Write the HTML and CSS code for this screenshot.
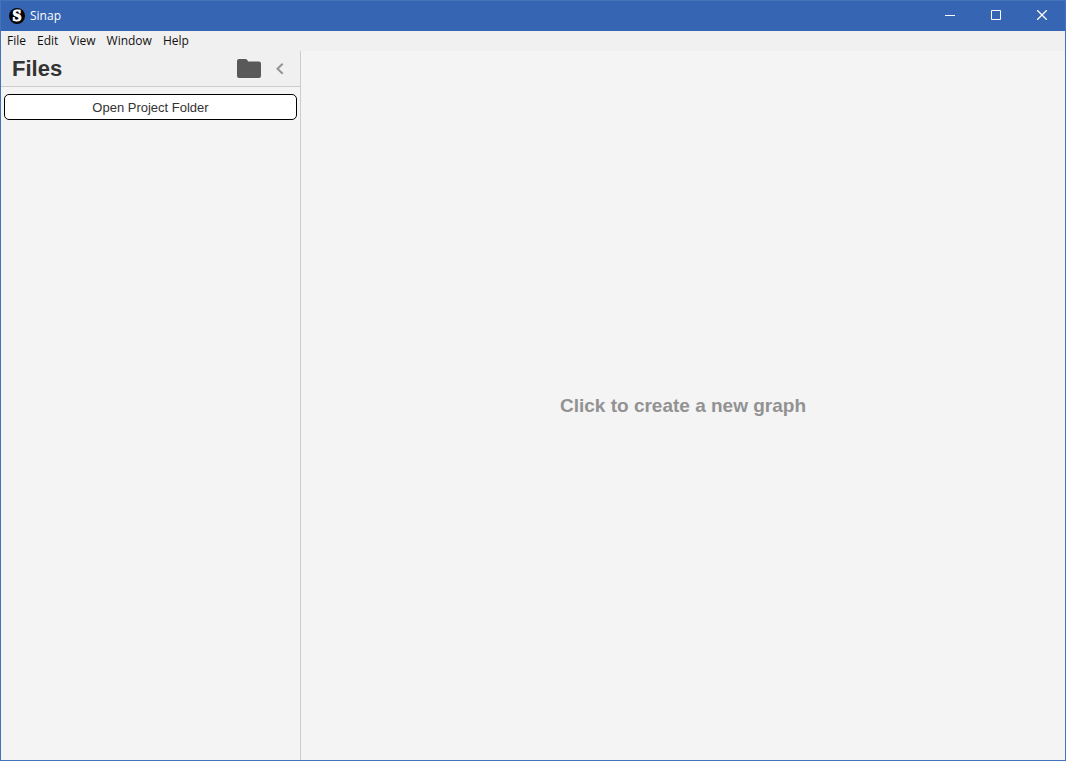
FILE: index.html
```html
<!DOCTYPE html>
<html lang="en">
<head>
<meta charset="utf-8">
<meta name="viewport" content="width=device-width, initial-scale=1">
<title>Sinap</title>
<link rel="stylesheet" href="styles.css">
</head>
<body>
<div class="window">
  <header class="titlebar">
    <svg class="logo" viewBox="0 0 16 16" aria-hidden="true">
      <circle cx="8" cy="8" r="8" fill="#050505"/>
      <text class="logo-letter" x="8" y="13" text-anchor="middle">S</text>
    </svg>
    <span class="app-name">Sinap</span>
    <div class="controls">
      <button class="control" type="button" aria-label="Minimize">
        <svg class="control-icon" viewBox="0 0 10 10"><path d="M0 5.5H10"/></svg>
      </button>
      <button class="control" type="button" aria-label="Maximize">
        <svg class="control-icon" viewBox="0 0 10 10"><path d="M.5 .5H9.5V9.5H.5Z"/></svg>
      </button>
      <button class="control" type="button" aria-label="Close">
        <svg class="control-icon" viewBox="0 0 10 10"><path stroke-width="1.300" d="M0 0L10 10M10 0L0 10"/></svg>
      </button>
    </div>
  </header>
  <nav class="menubar" aria-label="Application menu">
    <button class="menu-item" type="button">File</button>
    <button class="menu-item" type="button">Edit</button>
    <button class="menu-item" type="button">View</button>
    <button class="menu-item" type="button">Window</button>
    <button class="menu-item" type="button">Help</button>
  </nav>
  <div class="workspace">
    <aside class="sidebar">
      <div class="panel-header">
        <h1 class="panel-title">Files</h1>
        <button class="icon-button" type="button" aria-label="Project folder">
          <svg class="folder-icon" viewBox="0 0 24 20"><path fill="#595959" d="M2 0H8.500Q9.300 0 9.800 .6L11.300 2.400H22Q24 2.400 24 4.400V17Q24 19 22 19H2Q0 19 0 17V2Q0 0 2 0Z"/></svg>
        </button>
        <button class="icon-button" type="button" aria-label="Collapse sidebar">
          <svg class="chevron-icon" viewBox="0 0 8 12"><path d="M6.700 .8L1.500 5.800L6.700 10.800" fill="none" stroke="#939393" stroke-width="2"/></svg>
        </button>
      </div>
      <div class="panel-body">
        <button class="open-button" type="button">Open Project Folder</button>
      </div>
    </aside>
    <main class="canvas">
      <button class="new-graph" type="button">Click to create a new graph</button>
    </main>
  </div>
</div>
</body>
</html>
```
FILE: styles.css
```css
* { box-sizing: border-box; }

body {
  margin: 0;
  font-family: "Liberation Sans", Arial, sans-serif;
  background: #f4f4f4;
}

button {
  margin: 0;
  padding: 0;
  border: 0;
  background: none;
  font: inherit;
  color: inherit;
}

svg { display: block; }

.window {
  display: flex;
  flex-direction: column;
  min-height: 100vh;
  border: 1px solid #4573b9;
}

.titlebar {
  display: flex;
  align-items: center;
  height: 30px;
  padding-left: 8px;
  background: #3665b3;
  color: #fff;
  font: 12px/16px "Open Sans", sans-serif;
}

.logo {
  width: 16px;
  height: 16px;
}

.logo-letter {
  font: bold 16px "Liberation Serif", serif;
  fill: #fff;
  stroke: #fff;
  stroke-width: 1px;
}

.app-name { margin-left: 5px; }

.controls {
  display: flex;
  align-self: stretch;
  margin-left: auto;
}

.control {
  display: flex;
  align-items: center;
  justify-content: center;
  width: 46px;
  padding-bottom: 2px;
}

.control-icon {
  width: 10px;
  height: 10px;
  fill: none;
  stroke: #fff;
  stroke-width: 1;
}

.menubar {
  display: flex;
  gap: 11px;
  height: 20px;
  padding-left: 6px;
  background: #f0f0f0;
  color: #111;
  font: 12px/20px "Open Sans", sans-serif;
}

.workspace {
  display: flex;
  flex: 1;
}

.sidebar {
  width: 300px;
  flex: none;
  border-right: 1px solid #ccc;
}

.panel-header {
  display: flex;
  align-items: center;
  gap: 15px;
  height: 36px;
  padding: 0 16px 0 11px;
  background: #f0f0f0;
  border-bottom: 1px solid #ccc;
}

.panel-title {
  flex: 1;
  margin: 0;
  color: #333;
  font-size: 22px;
  line-height: 24px;
}

.folder-icon {
  width: 24px;
  height: 20px;
}

.chevron-icon {
  width: 8px;
  height: 12px;
}

.panel-body { padding: 7px 3px; }

.open-button {
  display: block;
  width: 100%;
  height: 26px;
  background: #fff;
  border: 1px solid #000;
  border-radius: 5px;
  color: #333;
  font-size: 13px;
}

.canvas {
  display: flex;
  flex: 1;
}

.new-graph {
  flex: 1;
  color: #929292;
  font-size: 19px;
  font-weight: bold;
}
```
